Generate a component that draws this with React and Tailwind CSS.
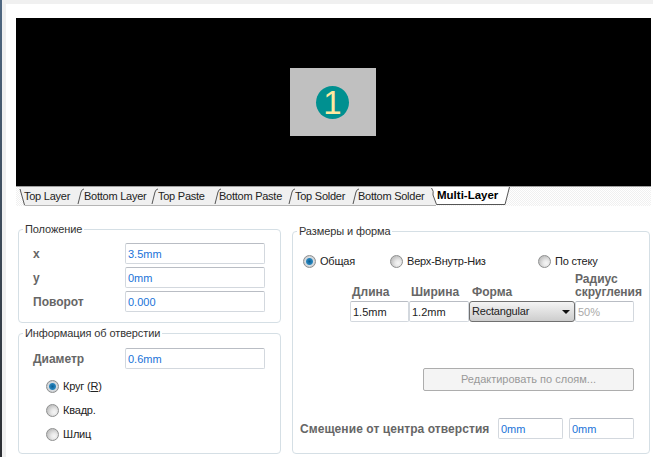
const tabs = [
    { name: "Top Layer", width: "w-[60px]" },
    { name: "Bottom Layer", width: "w-[74px]" },
    { name: "Top Paste", width: "w-[61px]" },
    { name: "Bottom Paste", width: "w-[76px]" },
    { name: "Top Solder", width: "w-[63px]" },
    { name: "Bottom Solder", width: "w-[79px]" },
];

function TabShapes() {
    return (
        <svg
            className="absolute left-0 top-0"
            width="635"
            height="19"
            viewBox="0 0 635 19"
            fill="none"
        >
            {/* inactive tabs */}
            <path d="M3 0 L9 18 L420 18 L415 0 Z" fill="#f0f0f0" />
            <path d="M8.5 18.5 H420" stroke="#b5b5b5" />
            <path d="M4 2 L8.5 18" stroke="#555" />
            <path d="M62 17 L65 5 Q66 2 68 2" stroke="#555" />
            <path d="M136 17 L139 5 Q140 2 142 2" stroke="#555" />
            <path d="M199 17 L202 5 Q203 2 205 2" stroke="#555" />
            <path d="M273 17 L276 5 Q277 2 279 2" stroke="#555" />
            <path d="M337 17 L340 5 Q341 2 343 2" stroke="#555" />
            {/* active tab */}
            <path d="M415 0 L420 18 L489 18 L494 0 Z" fill="#ffffff" />
            <path
                d="M415.5 1 Q418 4 417 8 L420.5 17.5 H489 L493.5 0"
                stroke="#555"
            />
        </svg>
    );
}

function Radio({ checked, label, className = "" }) {
    return (
        <div className={`flex h-[24px] items-center gap-[4px] tracking-[-0.2px] text-[#222] ${className}`}>
            <span
                className={`h-[13px] w-[13px] rounded-full border border-[#8e8f8f] ${
                    checked
                        ? "bg-[radial-gradient(circle,#0a5f96_0,#2a86bd_3px,#d9dde1_4px,#c4c8cc_6px)]"
                        : "bg-[radial-gradient(circle_at_65%_65%,#f6f6f6_0,#e8e8e8_3px,#c4c4c4_7px)]"
                }`}
            />
            <span>{label}</span>
        </div>
    );
}

function Field({ value, className = "", tone = "text-[#1a73d8]" }) {
    return (
        <input
            readOnly
            value={value}
            className={`h-[21px] rounded-[2px] border border-[#d3d8de] border-t-[#b9bdc4] bg-white px-[2px] outline-none ${tone} ${className}`}
        />
    );
}

function Label({ children, className = "" }) {
    return <span className={`text-[12px] font-bold text-[#666] ${className}`}>{children}</span>;
}

function Panel({ title, className = "", children }) {
    return (
        <fieldset className={`rounded-[4px] border border-[#d5dfe5] ${className}`}>
            <legend className="ml-[4px] h-[14px] px-[2px] leading-[14px] tracking-[-0.1px] text-[#333]">
                {title}
            </legend>
            {children}
        </fieldset>
    );
}

export default function App() {
    return (
        <div className="flex h-[457px] w-[653px] overflow-hidden bg-white font-['Liberation_Sans',sans-serif] text-[11px]">
            <div className="w-[2px] bg-[linear-gradient(#4f6882,#2c2f33)]" />
            <div className="w-[4px] bg-[#f0f0f0]" />
            <div className="flex w-[647px] flex-col">
                <div className="h-[4px] bg-[#f0f0f0]" />
                <div className="pl-[10px] pt-[14px]">
                    {/* preview */}
                    <div className="flex h-[168px] w-[635px] items-center justify-center bg-black pr-[2px]">
                        <div className="flex h-[68px] w-[86px] items-center justify-center bg-[#c0c0c0]">
                            <div className="flex h-[33px] w-[33px] items-center justify-center rounded-full bg-[#009090] text-[33px] leading-none text-[#ffe9a0]">
                                1
                            </div>
                        </div>
                    </div>
                    <div className="h-px w-[635px] bg-[#a0a0a0]" />

                    {/* layer tabs */}
                    <div className="relative h-[19px] w-[635px] bg-[repeating-conic-gradient(#f0f0f0_0%_25%,#ffffff_0%_50%)] bg-[length:2px_2px]">
                        <TabShapes />
                        <div className="relative flex h-[18px] items-center pl-[8px] tracking-[-0.25px] text-[#222]">
                            {tabs.map(tab => (
                                <span key={tab.name} className={tab.width}>
                                    {tab.name}
                                </span>
                            ))}
                            <span className="text-[11.5px] font-bold tracking-normal text-black">Multi-Layer</span>
                        </div>
                    </div>

                    <div className="flex items-start gap-[11px] pl-[2px]">
                        <div className="flex w-[263px] flex-col gap-[3px] pt-[16px]">
                            {/* position */}
                            <Panel title="Положение" className="h-[101px]">
                                <div className="grid grid-cols-[92px_140px] items-center gap-y-[3px] pl-[14px] pt-[7px]">
                                    <Label>x</Label>
                                    <Field value="3.5mm" />
                                    <Label>y</Label>
                                    <Field value="0mm" />
                                    <Label>Поворот</Label>
                                    <Field value="0.000" />
                                </div>
                            </Panel>
                            {/* hole info */}
                            <Panel title="Информация об отверстии" className="h-[128px]">
                                <div className="grid grid-cols-[92px_140px] items-center pl-[14px] pt-[8px]">
                                    <Label>Диаметр</Label>
                                    <Field value="0.6mm" />
                                </div>
                                <div className="pl-[27px] pt-[5px]">
                                    <Radio
                                        checked
                                        label={
                                            <>
                                                Круг (<span className="underline">R</span>)
                                            </>
                                        }
                                    />
                                    <Radio label="Квадр." />
                                    <Radio label="Шлиц" />
                                </div>
                            </Panel>
                        </div>

                        {/* size and shape */}
                        <div className="w-[358px] pt-[18px]">
                            <Panel title="Размеры и форма" className="h-[230px]">
                                <div className="flex pl-[10px] pt-[11px]">
                                    <Radio checked label="Общая" className="w-[87px]" />
                                    <Radio label="Верх-Внутр-Низ" className="w-[148px]" />
                                    <Radio label="По стеку" />
                                </div>
                                <div className="ml-[57px] grid h-[28px] grid-cols-[59px_60px_106px_59px] items-end pb-[2px] leading-[13px]">
                                    <Label className="pl-[2px]">Длина</Label>
                                    <Label className="pl-[2px]">Ширина</Label>
                                    <Label className="pl-[3px]">Форма</Label>
                                    <Label className="whitespace-nowrap">
                                        Радиус
                                        <br />
                                        скругления
                                    </Label>
                                </div>
                                <div className="ml-[57px] grid grid-cols-[59px_60px_106px_59px]">
                                    <Field value="1.5mm" tone="text-[#222]" />
                                    <Field value="1.2mm" tone="text-[#222]" />
                                    <div className="flex h-[21px] items-center justify-between rounded-[3px] border border-[#707070] bg-[linear-gradient(#f4f4f4,#cdcdcd)] pl-[2px] pr-[4px] tracking-[-0.2px] text-[#222]">
                                        <span>Rectangular</span>
                                        <svg width="8" height="4" viewBox="0 0 8 4">
                                            <path d="M0 0 H8 L4 4 Z" fill="#111" />
                                        </svg>
                                    </div>
                                    <Field
                                        value="50%"
                                        tone="text-[#aaaaaa]"
                                        className="border-[#b5b5b5] border-t-[#b5b5b5]"
                                    />
                                </div>
                                <button className="ml-[130px] mt-[46px] block h-[23px] w-[211px] rounded-[2px] border border-[#adadad] bg-[#f4f4f4] text-[#999]">
                                    Редактировать по слоям...
                                </button>
                                <div className="flex items-center pl-[7px] pt-[27px]">
                                    <Label className="w-[198px] tracking-[0.07px]">Смещение от центра отверстия</Label>
                                    <Field value="0mm" className="w-[65px]" />
                                    <Field value="0mm" className="ml-[6px] w-[65px]" />
                                </div>
                            </Panel>
                        </div>
                    </div>
                </div>
            </div>
        </div>
    );
}
